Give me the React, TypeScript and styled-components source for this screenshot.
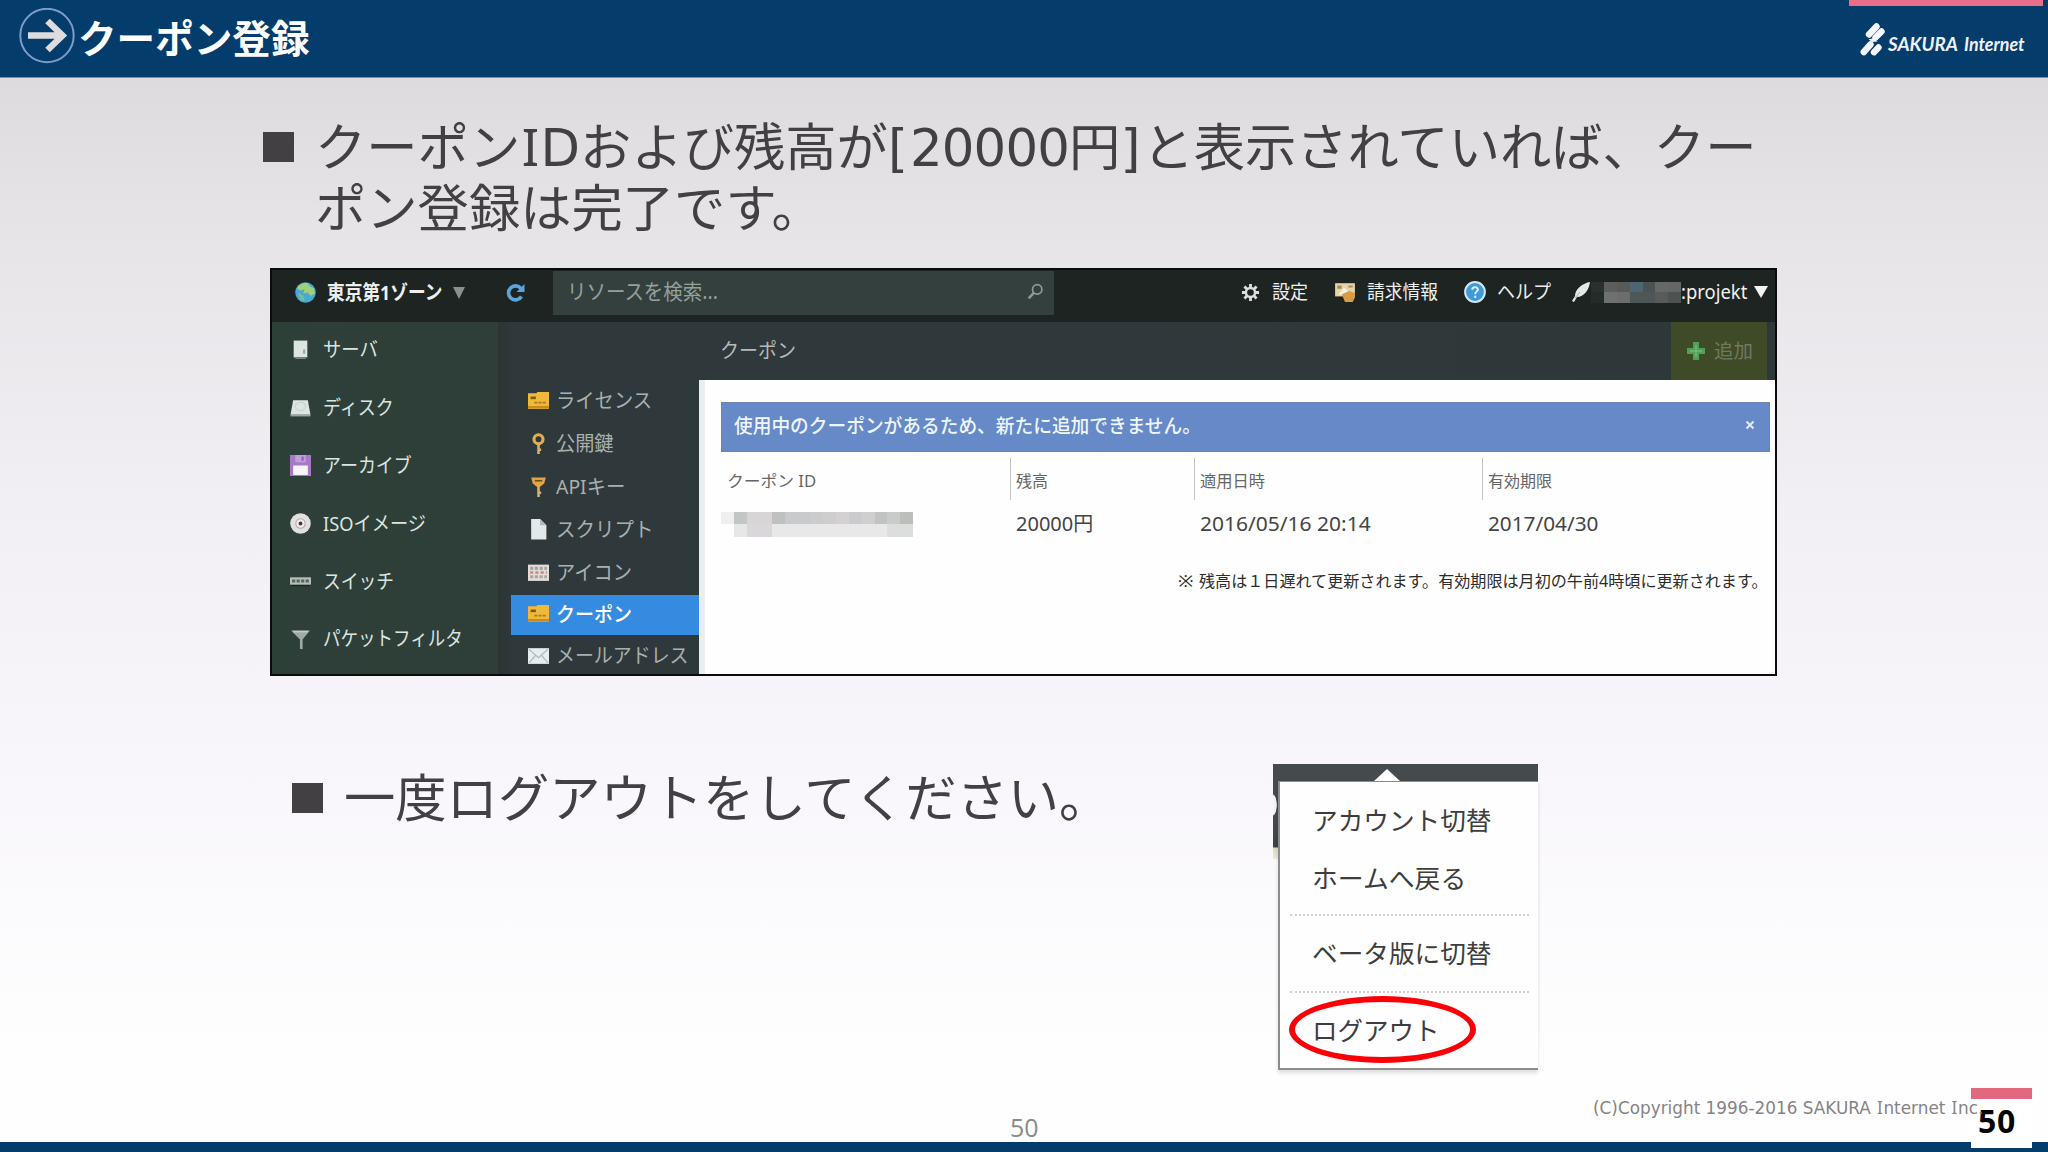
import React, { useLayoutEffect, useRef, useState } from "react";
import styled, { createGlobalStyle, css } from "styled-components";

const ui = `"Noto Sans", "Noto Sans CJK JP", sans-serif`;

const GlobalStyle = createGlobalStyle`
  * { box-sizing: border-box; }
  html, body { margin: 0; padding: 0; }
  body { font-family: ${ui}; overflow: hidden; }
`;

const row = css`
  display: flex;
  align-items: center;
`;

const FitBox = styled.span<{ $w: number }>`
  display: block;
  flex: none;
  width: ${(p) => p.$w}px;
  line-height: 1.2;
  white-space: nowrap;
`;
const FitInner = styled.span`
  display: inline-block;
  transform-origin: 0 50%;
`;

function Fit({ w, children, className }: { w: number; children: React.ReactNode; className?: string }) {
  const ref = useRef<HTMLSpanElement>(null);
  const [scale, setScale] = useState(1);
  useLayoutEffect(() => {
    if (ref.current) setScale(w / ref.current.offsetWidth);
  }, [w]);
  return (
    <FitBox $w={w} className={className}>
      <FitInner ref={ref} style={{ transform: `scaleX(${scale})` }}>
        {children}
      </FitInner>
    </FitBox>
  );
}

const Slide = styled.main`
  display: flex;
  flex-direction: column;
  width: 2048px;
  height: 1152px;
  overflow: hidden;
  background: linear-gradient(#dddbde 78px, #e6e4e7 230px, #f1eff3 500px, #f9f7fb 800px, #fefefe 1050px);
`;

/* ---------- slide header ---------- */
const Header = styled.header`
  display: flex;
  flex: none;
  height: 78px;
  padding: 0 5px 0 19px;
  background: #043c6b;
  border-bottom: 1px solid #6f8fba;
`;
const HeaderTitle = styled.h1`
  ${row}
  margin: 0;
  height: 72px;
  gap: 3px;
  color: #fff;
  font-size: 38.6px;
  font-weight: 700;
`;
const Brand = styled.div`
  width: 194px;
  margin-left: auto;
  border-top: 6px solid #e96f89;
`;
const BrandRow = styled.div`
  ${row}
  padding: 16px 0 0 11px;
  gap: 3px;
  color: #eef2fb;
  font-family: Lato, sans-serif;
  font-size: 19px;
  font-weight: 700;
  font-style: italic;
`;
const BrandName = styled.div`
  display: flex;
  gap: 6px;
  padding-top: 10px;
`;

/* ---------- slide body ---------- */
const Body = styled.div`
  display: flex;
  flex: 1;
  flex-direction: column;
  padding: 40px 0 0 263px;
`;
const Bullet = styled.div<{ $inset?: number }>`
  display: flex;
  align-items: flex-start;
  gap: 21px;
  padding-left: ${(p) => p.$inset ?? 0}px;
  color: #434044;
  font-family: "DejaVu Sans", "Noto Sans CJK JP", sans-serif;
  font-size: 51.3px;
  line-height: 61px;
`;
const Square = styled.i`
  flex: none;
  width: 31px;
  height: 30px;
  margin-top: 14px;
  background: #434044;
`;
const Line = styled.div`
  white-space: nowrap;
`;
const Latin = styled.span<{ $ls: number }>`
  letter-spacing: ${(p) => p.$ls}px;
`;
/* capital I with slab serifs */
const SlabI = styled.span<{ $pad: number }>`
  padding: 0 ${(p) => p.$pad}px;
  font-family: "Noto Sans", sans-serif;
  line-height: 0;
`;

/* ---------- control panel ---------- */
const Panel = styled.section`
  display: flex;
  flex-direction: column;
  width: 1507px;
  height: 408px;
  margin: 28px 0 0 7px;
  border: 2px solid #0b0b0b;
  background: #fff;
  overflow: hidden;
`;
const TopBar = styled.div`
  ${row}
  flex: none;
  height: 52px;
  padding: 0 7px 7px 23px;
  background: #1d2421;
  color: #eef0ef;
  font-size: 19px;
`;
const Zone = styled.div`
  ${row}
  width: 211px;
  gap: 11px;
  font-size: 20px;
  font-weight: 700;
`;
const Arrow = styled.i<{ $w: number; $h: number; $c: string }>`
  flex: none;
  width: 0;
  height: 0;
  border: ${(p) => p.$w / 2}px solid transparent;
  border-top: ${(p) => p.$h}px solid ${(p) => p.$c};
  border-bottom: 0;
`;
const Search = styled.div`
  ${row}
  justify-content: space-between;
  width: 501px;
  height: 44px;
  margin-left: 27px;
  padding: 0 10px 2px 14px;
  background: #33403e;
  color: #93a09c;
  font-size: 21px;
`;
const Tools = styled.div`
  ${row}
  margin-left: auto;
`;
const Tool = styled.div<{ $gap: number; $after: number }>`
  ${row}
  gap: ${(p) => p.$gap}px;
  margin-right: ${(p) => p.$after}px;
`;
const Mosaic = styled.div<{ $cell: number; $rowH: number; $cols: number }>`
  display: grid;
  flex: none;
  grid-template-columns: repeat(${(p) => p.$cols}, ${(p) => p.$cell}px);
  grid-auto-rows: ${(p) => p.$rowH}px;
`;
const Cell = styled.i<{ $c: string }>`
  background: ${(p) => p.$c};
`;

const Work = styled.div`
  display: flex;
  flex: 1;
  min-height: 0;
`;
const SideNav = styled.nav`
  flex: none;
  width: 226px;
  background: linear-gradient(90deg, #2d4038, #2f3e38);
`;
const SideItem = styled.div`
  ${row}
  height: 57.9px;
  gap: 12px;
  padding: 0 0 2px 18px;
  color: #dde5e1;
  font-size: 20px;
`;
const Right = styled.div`
  display: flex;
  flex: 1;
  flex-direction: column;
  background: linear-gradient(90deg, #2a3534, #2f383b 16px);
`;
const TitleBar = styled.div`
  ${row}
  flex: none;
  justify-content: space-between;
  height: 58px;
  padding: 0 8px 0 222px;
  background: linear-gradient(90deg, #2a3534, #2f383b 16px, #2f3839);
  color: #b4bab8;
  font-size: 20px;
`;
const AddButton = styled.div`
  ${row}
  justify-content: center;
  gap: 8px;
  width: 96px;
  height: 58px;
  background: #3f4b27;
  color: #71795f;
  font-size: 19px;
`;
const Split = styled.div`
  display: flex;
  flex: 1;
`;
const SubNav = styled.nav`
  flex: none;
  width: 201px;
  padding-left: 13px;
`;
const SubItem = styled.div<{ $on?: boolean }>`
  ${row}
  gap: 7px;
  height: ${(p) => (p.$on ? 40 : 43.1)}px;
  padding: 0 0 3px 17px;
  background: ${(p) => (p.$on ? "#358be0" : "transparent")};
  color: ${(p) => (p.$on ? "#fff" : "#a9b0b0")};
  font-size: 20.5px;
  font-weight: ${(p) => (p.$on ? 500 : 400)};
`;
const Content = styled.div`
  display: flex;
  flex: 1;
  flex-direction: column;
  padding: 22px 5px 0 16px;
  background: #fefefe;
  border-left: 6px solid #e9eef2;
`;
const Notice = styled.div`
  ${row}
  flex: none;
  justify-content: space-between;
  height: 50px;
  padding: 0 14px 2px 12px;
  border: 1px solid #6f83ae;
  background: #6689c8;
  color: #eef5fb;
  font-size: 19.5px;
  font-weight: 500;
`;
const Table = styled.div`
  display: grid;
  grid-template-columns: 289px 184px 288px 1fr;
  margin-top: 6px;
`;
const Th = styled.div`
  ${row}
  height: 42px;
  padding: 5px 0 0 5px;
  border-left: 1px solid #c4c4c4;
  color: #666;
  font-size: 16px;
  &:first-child { border-color: transparent; }
`;
const Td = styled.div<{ $flush?: boolean }>`
  ${row}
  height: 46px;
  padding: 2px 0 0 ${(p) => (p.$flush ? 0 : 6)}px;
  color: #444;
  font-size: 20px;
`;
const Note = styled.div`
  display: flex;
  justify-content: flex-end;
  gap: 6px;
  padding: 26px 3px 0 0;
  color: #2c2c2c;
  font-size: 16px;
`;

/* ---------- log-out block ---------- */
const Lower = styled.div`
  display: flex;
  height: 308px;
  margin-top: 88px;
`;
const LowerText = styled.div`
  width: 1010px;
  padding-top: 5px;
`;
const Shot = styled.div`
  display: flex;
  flex-direction: column;
  width: 265px;
  height: 306px;
`;
const ShotBar = styled.div`
  display: flex;
  flex: none;
  align-items: flex-end;
  height: 17px;
  padding-left: 101px;
  background: #454b4c;
`;
const Notch = styled.i`
  border: 13px solid transparent;
  border-top: 0;
  border-bottom: 12px solid #fefefe;
`;
const ShotBody = styled.div`
  display: flex;
  flex: 1;
`;
const Sliver = styled.div`
  width: 5px;
  background:
    radial-gradient(ellipse 4px 11px at 0 24px, #f4f4f4 85%, transparent),
    linear-gradient(#454b4c 36px, #3a4545 66px, #dcdcc0 67px, #eceadc 78px, transparent 78px);
`;
const Menu = styled.div`
  flex: 1;
  padding: 10px 9px 0 10px;
  border: 2px solid #8a8c8e;
  border-width: 1px 0 2px 2px;
  background: #fefefe;
  color: #3d3d3d;
  font-size: 25.5px;
  box-shadow: 0 3px 4px #0002;
`;
const MenuItem = styled.div<{ $h: number; $lift?: number }>`
  ${row}
  position: relative;
  height: ${(p) => p.$h}px;
  padding: 0 0 ${(p) => p.$lift ?? 0}px 22px;
`;
const Rule = styled.hr`
  height: 0;
  margin: 0;
  border: 0;
  border-top: 2px dotted #cfcfd2;
`;
const Ring = styled.i`
  position: absolute;
  left: -1px;
  top: 3px;
  width: 187px;
  height: 67px;
  border: 6px solid #fb0007;
  border-radius: 50%;
`;

/* ---------- slide footer ---------- */
const Footer = styled.footer`
  display: grid;
  flex: none;
  grid-template-columns: 1010px 583px 378px 61px 16px;
  height: 64px;
  background: linear-gradient(transparent 54px, #043c6b 54px);
`;
const PageNo = styled.div`
  padding-top: 22px;
  color: #8a8a8c;
  font-family: "Open Sans", sans-serif;
  font-size: 25px;
`;
const Copyright = styled.div`
  padding-top: 10px;
  color: #858386;
  font-family: "DejaVu Sans", sans-serif;
  font-size: 17.3px;
`;
const PageTag = styled.div`
  height: 60px;
  padding: 0 0 0 7px;
  border-top: 11px solid #e2687f;
  background: #fff;
  color: #050505;
  font-family: "Open Sans", sans-serif;
  font-size: 32px;
  font-weight: 700;
  letter-spacing: 0.7px;
  line-height: 43px;
`;

/* ---------- icons ---------- */
const IconSvg = styled.svg`
  flex: none;
`;
const Svg = ({ s = 21, h, vb = "0 0 20 20", children }: { s?: number; h?: number; vb?: string; children: React.ReactNode }) => (
  <IconSvg width={s} height={h ?? s} viewBox={vb} fill="none">{children}</IconSvg>
);

const CircleArrow = () => (
  <Svg s={56} vb="0 0 56 56">
    <circle cx="28" cy="27.5" r="26.7" stroke="#7d9ccb" strokeWidth="2" />
    <path d="M9 27.5H44M28.5 13L43.5 27.5L28.5 42" stroke="#dfdcde" strokeWidth="6.5" />
  </Svg>
);
const SakuraMark = () => (
  <Svg s={25} h={34} vb="0 0 25 34">
    <g stroke="#f4f7ff" strokeWidth="6.4" strokeLinecap="round">
      <path d="M9 12.5L16.5 4.5M15.5 15.5L21.5 9.5" />
      <path d="M3.8 30L10.5 22.5M14 30.2L18.5 25.5" />
    </g>
    <path d="M8.5 17.5L14 16L17.5 19.5L12.5 20Z" fill="#f4f7ff" />
  </Svg>
);
const Globe = () => (
  <Svg s={21}>
    <circle cx="10" cy="10" r="9.8" fill="#4aa9d2" />
    <path d="M2 6C4 1.5 9 .5 12 1L14 4L18 6L19 11L15 13L12 10L8 11L9 7L5 8Z" fill="#9fd07c" />
    <path d="M3 10L8 13L9 18L5 17Z" fill="#74bf9a" />
  </Svg>
);
const Reload = () => (
  <Svg s={20}>
    <path d="M15.5 13.5A7 7 0 1 1 15 5.5" stroke="#5aa5dc" strokeWidth="3.6" />
    <path d="M18.5 1V9H10.5Z" fill="#5aa5dc" />
  </Svg>
);
const Magnifier = () => (
  <Svg s={17}>
    <circle cx="12" cy="7.5" r="5.5" stroke="#909a98" strokeWidth="2" />
    <path d="M8 11.5L2 18" stroke="#909a98" strokeWidth="3" />
  </Svg>
);
const Gear = () => (
  <Svg s={19}>
    <g stroke="#dcdfde" strokeWidth="3">
      <path d="M10 1V5M10 15V19M1 10H5M15 10H19M3.6 3.6L6.5 6.5M13.5 13.5L16.4 16.4M3.6 16.4L6.5 13.5M13.5 6.5L16.4 3.6" />
      <circle cx="10" cy="10" r="4.8" strokeWidth="2.6" />
    </g>
  </Svg>
);
const Bill = () => (
  <Svg s={22}>
    <path d="M1 2H19V14H1Z" fill="#e6d3a8" />
    <path d="M3 4H7V7H3ZM13 4H17V6H13Z" fill="#a98a58" />
    <path d="M4 12L9 6L13 9L10 14Z" fill="#f5efe0" />
    <path d="M7 12L14 9L19 11V15L17 19H10Z" fill="#d79c45" />
  </Svg>
);
const Help = () => (
  <Svg s={22}>
    <circle cx="10" cy="10" r="9" fill="#3f9bd8" stroke="#d4e7f5" strokeWidth="1.8" />
    <path d="M7.5 8C7.5 4.8 12.8 4.8 12.6 7.8C12.5 9.5 10.2 9.5 10.2 12M10.2 13.5V15.5" stroke="#e6f3fb" strokeWidth="1.7" />
  </Svg>
);
const Feather = () => (
  <Svg s={20}>
    <path d="M19 0C12 1 4 7 4 14L1 19L3 20L6 15C13 15 18 8 19 0Z" fill="#e3ebe6" />
    <path d="M4 16L9 10" stroke="#9fb0a8" />
  </Svg>
);
const Plus = () => (
  <Svg s={20}>
    <path d="M7 1H13V7H19V13H13V19H7V13H1V7H7Z" fill="#4f9f58" />
    <path d="M4 10H16M10 4V16" stroke="#76b877" strokeWidth="1.5" />
  </Svg>
);

const ServerIcon = () => (
  <Svg>
    <path d="M3.5 1.5H16.5V17.5H3.5Z" fill="#dce5e0" />
    <path d="M12.5 10H14.5V14H12.5Z" fill="#9aa8a1" />
    <path d="M5 18.5H15" stroke="#7e8b85" />
  </Svg>
);
const DiskIcon = () => (
  <Svg>
    <path d="M3 3H17L19.5 17H.5Z" fill="#dde5e2" />
    <ellipse cx="10" cy="9" rx="5" ry="4" stroke="#c6d1cd" />
    <path d="M.5 17.5H19.5" stroke="#9ba7a3" strokeWidth="2" />
  </Svg>
);
const FloppyIcon = () => (
  <Svg>
    <path d="M0 0H20V20H0Z" fill="#a678c6" />
    <path d="M5 0H15V7H5Z" fill="#c39ddb" />
    <path d="M3 10H17V19H3Z" fill="#f7f4fa" />
    <path d="M11 1.5H13V5.5H11Z" fill="#8f5eb4" />
  </Svg>
);
const DiscIcon = () => (
  <Svg>
    <circle cx="10" cy="10" r="9.8" fill="#e2e0e0" />
    <circle cx="10" cy="10" r="4.5" fill="#f3eded" stroke="#b5a9a9" />
    <circle cx="10" cy="10" r="1.8" fill="#3c3c3c" />
  </Svg>
);
const SwitchIcon = () => (
  <Svg>
    <path d="M0 6H20V13H0Z" fill="#b3beb8" />
    <path d="M2 9.5H18" stroke="#56645d" strokeWidth="3" strokeDasharray="3 1.3" />
    <path d="M1 14H19" stroke="#18221d" />
  </Svg>
);
const FilterIcon = () => (
  <Svg>
    <path d="M1 1.5H19L12 10V19H9.5V10Z" fill="#9fa9a5" />
    <path d="M3 2.5H17" stroke="#c3cac7" strokeWidth="1.5" />
  </Svg>
);
const CardIcon = () => (
  <Svg>
    <path d="M0 3H8L9 2H20V18H0Z" fill="#f1b93a" />
    <path d="M0 16.5H20" stroke="#c98c1c" strokeWidth="2.5" />
    <path d="M2.5 7.5H7.5" stroke="#7a5a18" strokeWidth="2.5" />
    <path d="M6 12H17" stroke="#a87a1f" strokeWidth="1.5" strokeDasharray="3 1" />
  </Svg>
);
const KeyIcon = () => (
  <Svg>
    <circle cx="10" cy="6" r="4.3" stroke="#e2ad4e" strokeWidth="3" />
    <path d="M10 10V20M10 16H12.5" stroke="#d9b36a" strokeWidth="2.4" />
  </Svg>
);
const ApiKeyIcon = () => (
  <Svg>
    <path d="M3 1.5H17L15.5 7L12 10H8L4.5 7Z" fill="#e2a545" />
    <path d="M6.5 4.5H13.5" stroke="#6b4a1c" strokeWidth="1.5" />
    <path d="M10 9V20M10 16H12.5" stroke="#d9b36a" strokeWidth="2.4" />
  </Svg>
);
const ScriptIcon = () => (
  <Svg>
    <path d="M3 0H11.5L17.5 6V19.5H3Z" fill="#e3e8ea" />
    <path d="M11.5 0V6H17.5Z" fill="#aeb8bd" />
  </Svg>
);
const IconsIcon = () => (
  <Svg>
    <path d="M0 2.5H20V18H0Z" fill="#e3ded9" />
    <path d="M2 6H18M2 14H18" stroke="#aaa5a1" strokeWidth="3" strokeDasharray="3 1.5" />
    <path d="M2 10H18" stroke="#c98a7c" strokeWidth="2.5" strokeDasharray="3 2" />
  </Svg>
);
const MailIcon = () => (
  <Svg>
    <path d="M0 3H20V18H0Z" fill="#e6edf0" />
    <path d="M1 4L10 12L19 4M1 17L7 10M19 17L13 10" stroke="#aebcc2" strokeWidth="1.2" />
  </Svg>
);

const sideItems = [
  { t: "サーバ", w: 55, I: ServerIcon },
  { t: "ディスク", w: 71, I: DiskIcon },
  { t: "アーカイブ", w: 89, I: FloppyIcon },
  { t: "ISOイメージ", w: 103, I: DiscIcon },
  { t: "スイッチ", w: 71, I: SwitchIcon },
  { t: "パケットフィルタ", w: 140, I: FilterIcon },
];
const subItems = [
  { t: "ライセンス", w: 96, I: CardIcon },
  { t: "公開鍵", w: 58, I: KeyIcon },
  { t: "APIキー", w: 69, I: ApiKeyIcon },
  { t: "スクリプト", w: 98, I: ScriptIcon },
  { t: "アイコン", w: 76, I: IconsIcon },
  { t: "クーポン", w: 76, I: CardIcon, on: true },
  { t: "メールアドレス", w: 133, I: MailIcon },
];

const accountCells = "#2a302f #5b5e5d #565a59 #4e6670 #4c5354 #666968 #646766 #252b2a #6e7170 #6a6e6c #4f5656 #505656 #585b5a #4e5251".split(" ");
const idCells =
  "#efefef #c2c6c5 #d8d5d7 #d8d5d7 #bfc0c0 #c9cacb #c9cacb #cbcccc #cecece #d3d1d2 #cbcbcd #cfcfcf #c0c2c3 #c9cbcb #bcbeb9 #fefefe #e6e8e7 #d9d7d9 #d9d7d9 #e8e8e8 #e8e8e8 #e8e8e8 #e8e8e8 #e8e8e8 #e8e8e8 #e8e8e8 #e8e8e8 #e8e8e8 #dcdedd #dcdedd".split(" ");

export default function App() {
  return (
    <Slide>
      <GlobalStyle />
      <Header>
        <HeaderTitle>
          <CircleArrow />
          クーポン登録
        </HeaderTitle>
        <Brand>
          <BrandRow>
            <SakuraMark />
            <BrandName>
              <Fit w={70}>SAKURA</Fit>
              <Fit w={61}>Internet</Fit>
            </BrandName>
          </BrandRow>
        </Brand>
      </Header>

      <Body>
        <Bullet>
          <Square />
          <div>
            <Line>
              クーポン<SlabI $pad={1.5}>I</SlabI>Dおよび残高が<Latin $ls={2}>[</Latin><Latin $ls={-0.8}>20000</Latin>円<Latin $ls={2}>]</Latin>と表示されていれば、クー
            </Line>
            <Line>ポン登録は完了です。</Line>
          </div>
        </Bullet>

        <Panel>
          <TopBar>
            <Zone>
              <Globe />
              <Fit w={115}>東京第1ゾーン</Fit>
              <Arrow $w={13} $h={12} $c="#8b908e" />
            </Zone>
            <Reload />
            <Search>
              <Fit w={151}>リソースを検索...</Fit>
              <Magnifier />
            </Search>
            <Tools>
              <Tool $gap={12} $after={26}><Gear /><Fit w={36}>設定</Fit></Tool>
              <Tool $gap={11} $after={26}><Bill /><Fit w={71}>請求情報</Fit></Tool>
              <Tool $gap={11} $after={20}><Help /><Fit w={54}>ヘルプ</Fit></Tool>
              <Tool $gap={0} $after={0}>
                <Feather />
                <Mosaic $cell={12.8} $rowH={10.5} $cols={7}>
                  {accountCells.map((c, i) => <Cell key={i} $c={c} />)}
                </Mosaic>
              </Tool>
              <Tool $gap={7} $after={0}><Fit w={66}>:projekt</Fit><Arrow $w={15} $h={12} $c="#f2f3f2" /></Tool>
            </Tools>
          </TopBar>
          <Work>
            <SideNav>
              {sideItems.map(({ t, w, I }) => (
                <SideItem key={t}><I /><Fit w={w}>{t}</Fit></SideItem>
              ))}
            </SideNav>
            <Right>
              <TitleBar>
                <Fit w={76}>クーポン</Fit>
                <AddButton><Plus /><Fit w={39}>追加</Fit></AddButton>
              </TitleBar>
              <Split>
                <SubNav>
                  {subItems.map(({ t, w, I, on }) => (
                    <SubItem key={t} $on={on}><I /><Fit w={w}>{t}</Fit></SubItem>
                  ))}
                </SubNav>
                <Content>
                  <Notice>
                    <Fit w={467}>使用中のクーポンがあるため、新たに追加できません。</Fit>
                    <Svg s={10} vb="0 0 10 10"><path d="M1.5 0.5L8.5 7.5M8.5 0.5L1.5 7.5" stroke="#e3ebfa" strokeWidth="2" /></Svg>
                  </Notice>
                  <Table>
                    <Th><Fit w={89}>クーポン ID</Fit></Th>
                    <Th><Fit w={32}>残高</Fit></Th>
                    <Th><Fit w={65}>適用日時</Fit></Th>
                    <Th><Fit w={64}>有効期限</Fit></Th>
                    <Td $flush>
                      <Mosaic $cell={12.8} $rowH={12.5} $cols={15}>
                        {idCells.map((c, i) => <Cell key={i} $c={c} />)}
                      </Mosaic>
                    </Td>
                    <Td><Fit w={77}>20000円</Fit></Td>
                    <Td><Fit w={171}>2016/05/16 20:14</Fit></Td>
                    <Td><Fit w={110}>2017/04/30</Fit></Td>
                  </Table>
                  <Note>
                    <Fit w={15}>※</Fit>
                    <Fit w={568}>残高は１日遅れて更新されます。有効期限は月初の午前4時頃に更新されます。</Fit>
                  </Note>
                </Content>
              </Split>
            </Right>
          </Work>
        </Panel>

        <Lower>
          <LowerText>
            <Bullet $inset={29}>
              <Square />
              <Line>一度ログアウトをしてください。</Line>
            </Bullet>
          </LowerText>
          <Shot>
            <ShotBar><Notch /></ShotBar>
            <ShotBody>
              <Sliver />
              <Menu>
                <MenuItem $h={57}><Fit w={180}>アカウント切替</Fit></MenuItem>
                <MenuItem $h={65} $lift={7}><Fit w={154}>ホームへ戻る</Fit></MenuItem>
                <Rule />
                <MenuItem $h={75}><Fit w={180}>ベータ版に切替</Fit></MenuItem>
                <Rule />
                <MenuItem $h={74}><Fit w={128}>ログアウト</Fit><Ring /></MenuItem>
              </Menu>
            </ShotBody>
          </Shot>
        </Lower>
      </Body>

      <Footer>
        <span />
        <PageNo>50</PageNo>
        <Copyright>
          <Fit w={390}>
            (C)Copyright 1996-2016 SAKURA <SlabI $pad={0.8}>I</SlabI>nternet <SlabI $pad={0.8}>I</SlabI>nc.
          </Fit>
        </Copyright>
        <PageTag>50</PageTag>
      </Footer>
    </Slide>
  );
}
